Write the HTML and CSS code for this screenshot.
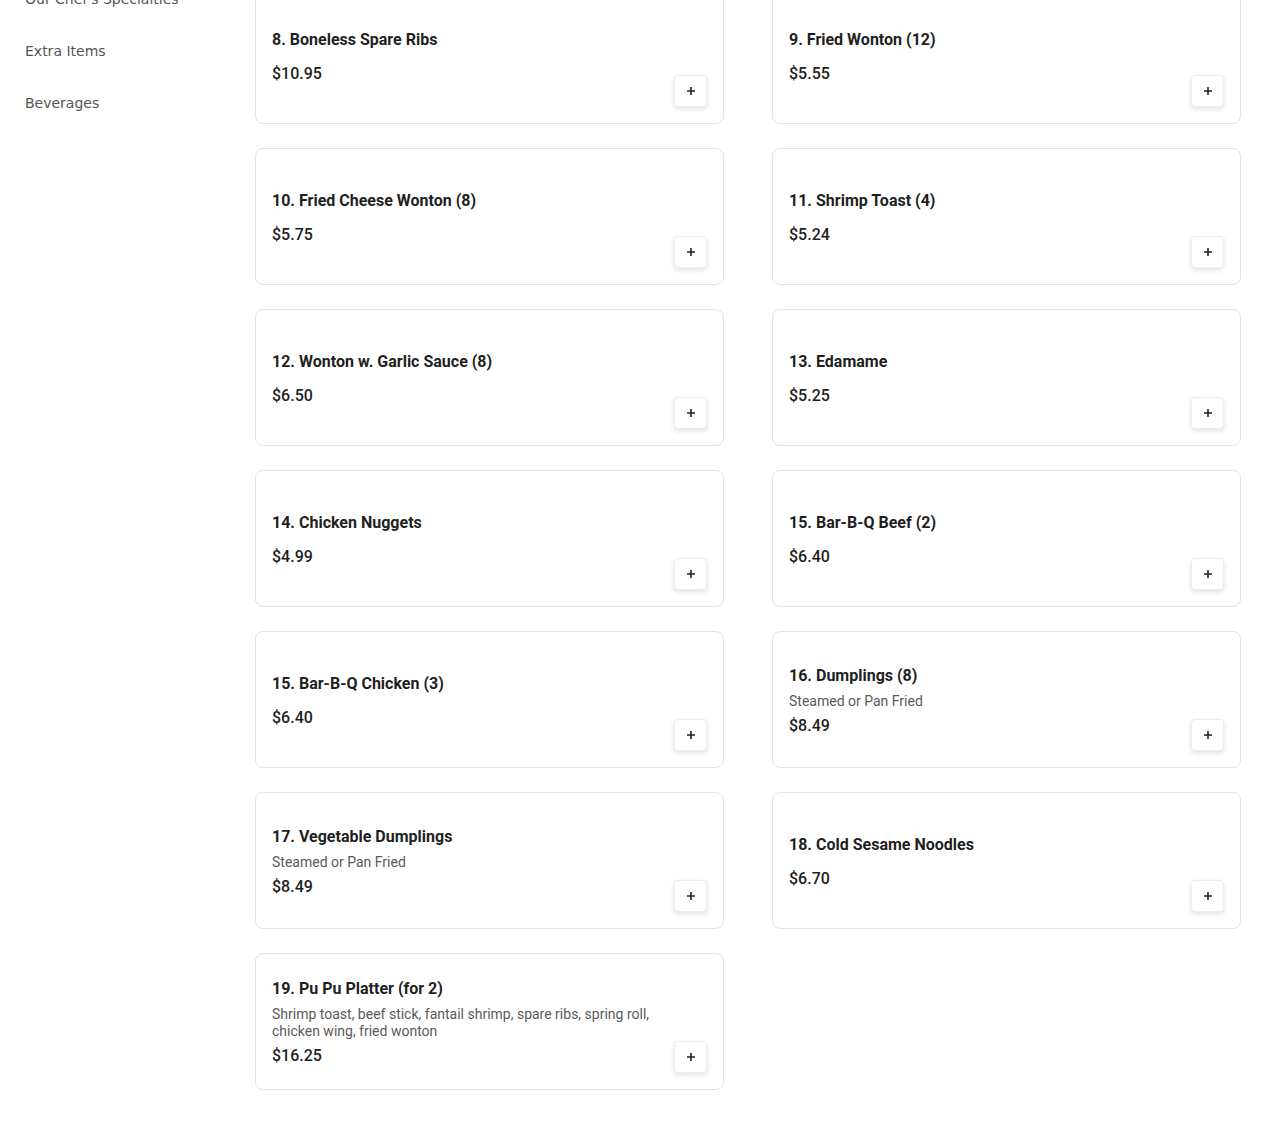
FILE: index.html
```html
<!DOCTYPE html>
<html lang="en">
<head>
<meta charset="utf-8">
<title>Menu</title>
<link rel="stylesheet" href="styles.css">
</head>
<body>
<div class="page">
  <nav class="sidebar">
    <a class="side-link">Our Chef's Specialties</a>
    <a class="side-link">Extra Items</a>
    <a class="side-link">Beverages</a>
  </nav>
  <main class="grid">
    <div class="card"><div class="info"><div class="title">8. Boneless Spare Ribs</div><div class="price">$10.95</div></div><button class="add"><svg viewBox="0 0 10 10" width="10" height="10"><path d="M5 1v8M1 5h8" stroke="#222" stroke-width="1.6" fill="none"/></svg></button></div>
    <div class="card"><div class="info"><div class="title">9. Fried Wonton (12)</div><div class="price">$5.55</div></div><button class="add"><svg viewBox="0 0 10 10" width="10" height="10"><path d="M5 1v8M1 5h8" stroke="#222" stroke-width="1.6" fill="none"/></svg></button></div>
    <div class="card"><div class="info"><div class="title">10. Fried Cheese Wonton (8)</div><div class="price">$5.75</div></div><button class="add"><svg viewBox="0 0 10 10" width="10" height="10"><path d="M5 1v8M1 5h8" stroke="#222" stroke-width="1.6" fill="none"/></svg></button></div>
    <div class="card"><div class="info"><div class="title">11. Shrimp Toast (4)</div><div class="price">$5.24</div></div><button class="add"><svg viewBox="0 0 10 10" width="10" height="10"><path d="M5 1v8M1 5h8" stroke="#222" stroke-width="1.6" fill="none"/></svg></button></div>
    <div class="card"><div class="info"><div class="title">12. Wonton w. Garlic Sauce (8)</div><div class="price">$6.50</div></div><button class="add"><svg viewBox="0 0 10 10" width="10" height="10"><path d="M5 1v8M1 5h8" stroke="#222" stroke-width="1.6" fill="none"/></svg></button></div>
    <div class="card"><div class="info"><div class="title">13. Edamame</div><div class="price">$5.25</div></div><button class="add"><svg viewBox="0 0 10 10" width="10" height="10"><path d="M5 1v8M1 5h8" stroke="#222" stroke-width="1.6" fill="none"/></svg></button></div>
    <div class="card"><div class="info"><div class="title">14. Chicken Nuggets</div><div class="price">$4.99</div></div><button class="add"><svg viewBox="0 0 10 10" width="10" height="10"><path d="M5 1v8M1 5h8" stroke="#222" stroke-width="1.6" fill="none"/></svg></button></div>
    <div class="card"><div class="info"><div class="title">15. Bar-B-Q Beef (2)</div><div class="price">$6.40</div></div><button class="add"><svg viewBox="0 0 10 10" width="10" height="10"><path d="M5 1v8M1 5h8" stroke="#222" stroke-width="1.6" fill="none"/></svg></button></div>
    <div class="card"><div class="info"><div class="title">15. Bar-B-Q Chicken (3)</div><div class="price">$6.40</div></div><button class="add"><svg viewBox="0 0 10 10" width="10" height="10"><path d="M5 1v8M1 5h8" stroke="#222" stroke-width="1.6" fill="none"/></svg></button></div>
    <div class="card"><div class="info"><div class="title">16. Dumplings (8)</div><div class="desc">Steamed or Pan Fried</div><div class="price">$8.49</div></div><button class="add"><svg viewBox="0 0 10 10" width="10" height="10"><path d="M5 1v8M1 5h8" stroke="#222" stroke-width="1.6" fill="none"/></svg></button></div>
    <div class="card"><div class="info"><div class="title">17. Vegetable Dumplings</div><div class="desc">Steamed or Pan Fried</div><div class="price">$8.49</div></div><button class="add"><svg viewBox="0 0 10 10" width="10" height="10"><path d="M5 1v8M1 5h8" stroke="#222" stroke-width="1.6" fill="none"/></svg></button></div>
    <div class="card"><div class="info"><div class="title">18. Cold Sesame Noodles</div><div class="price">$6.70</div></div><button class="add"><svg viewBox="0 0 10 10" width="10" height="10"><path d="M5 1v8M1 5h8" stroke="#222" stroke-width="1.6" fill="none"/></svg></button></div>
    <div class="card"><div class="info"><div class="title">19. Pu Pu Platter (for 2)</div><div class="desc">Shrimp toast, beef stick, fantail shrimp, spare ribs, spring roll, chicken wing, fried wonton</div><div class="price">$16.25</div></div><button class="add"><svg viewBox="0 0 10 10" width="10" height="10"><path d="M5 1v8M1 5h8" stroke="#222" stroke-width="1.6" fill="none"/></svg></button></div>
  </main>
</div>
</body>
</html>
```

FILE: styles.css
```css
html, body {
  margin: 0;
  padding: 0;
  background: #ffffff;
}

.page {
  display: flex;
  align-items: flex-start;
  margin-top: -13px;
  padding-right: 29px;
}

.sidebar {
  width: 230px;
  flex: none;
  padding-left: 25px;
  margin-top: -14px;
  display: flex;
  flex-direction: column;
  font-family: "DejaVu Sans", sans-serif;
  font-size: 14px;
  color: #555555;
}

.side-link {
  display: block;
  padding: 16px 0;
  line-height: 20px;
}

.grid {
  flex: 1;
  display: grid;
  grid-template-columns: 469px 469px;
  column-gap: 48px;
  row-gap: 24px;
  font-family: Roboto, "Liberation Sans", sans-serif;
}

.card {
  box-sizing: border-box;
  height: 137px;
  border: 1px solid #e3e3e3;
  border-radius: 8px;
  padding: 16px;
  display: flex;
  gap: 16px;
  background: #fff;
}

.info {
  flex: 1;
  align-self: center;
  display: flex;
  flex-direction: column;
  padding-top: 2px;
}

.title {
  font-size: 16px;
  font-weight: 700;
  line-height: 24px;
  color: #1f1f1f;
}

.desc {
  margin-top: 5px;
  font-size: 14px;
  line-height: 17px;
  color: #5a5a5a;
}

.price {
  margin-top: 10px;
  font-size: 16px;
  font-weight: 500;
  line-height: 24px;
  color: #1f1f1f;
}

.desc + .price {
  margin-top: 4px;
}

.add {
  align-self: flex-end;
  flex: none;
  width: 33px;
  height: 32px;
  padding: 0;
  border: 1px solid #ededed;
  border-radius: 4px;
  background: #fff;
  box-shadow: 0 2px 5px rgba(0, 0, 0, 0.12);
  display: flex;
  align-items: center;
  justify-content: center;
}
```
